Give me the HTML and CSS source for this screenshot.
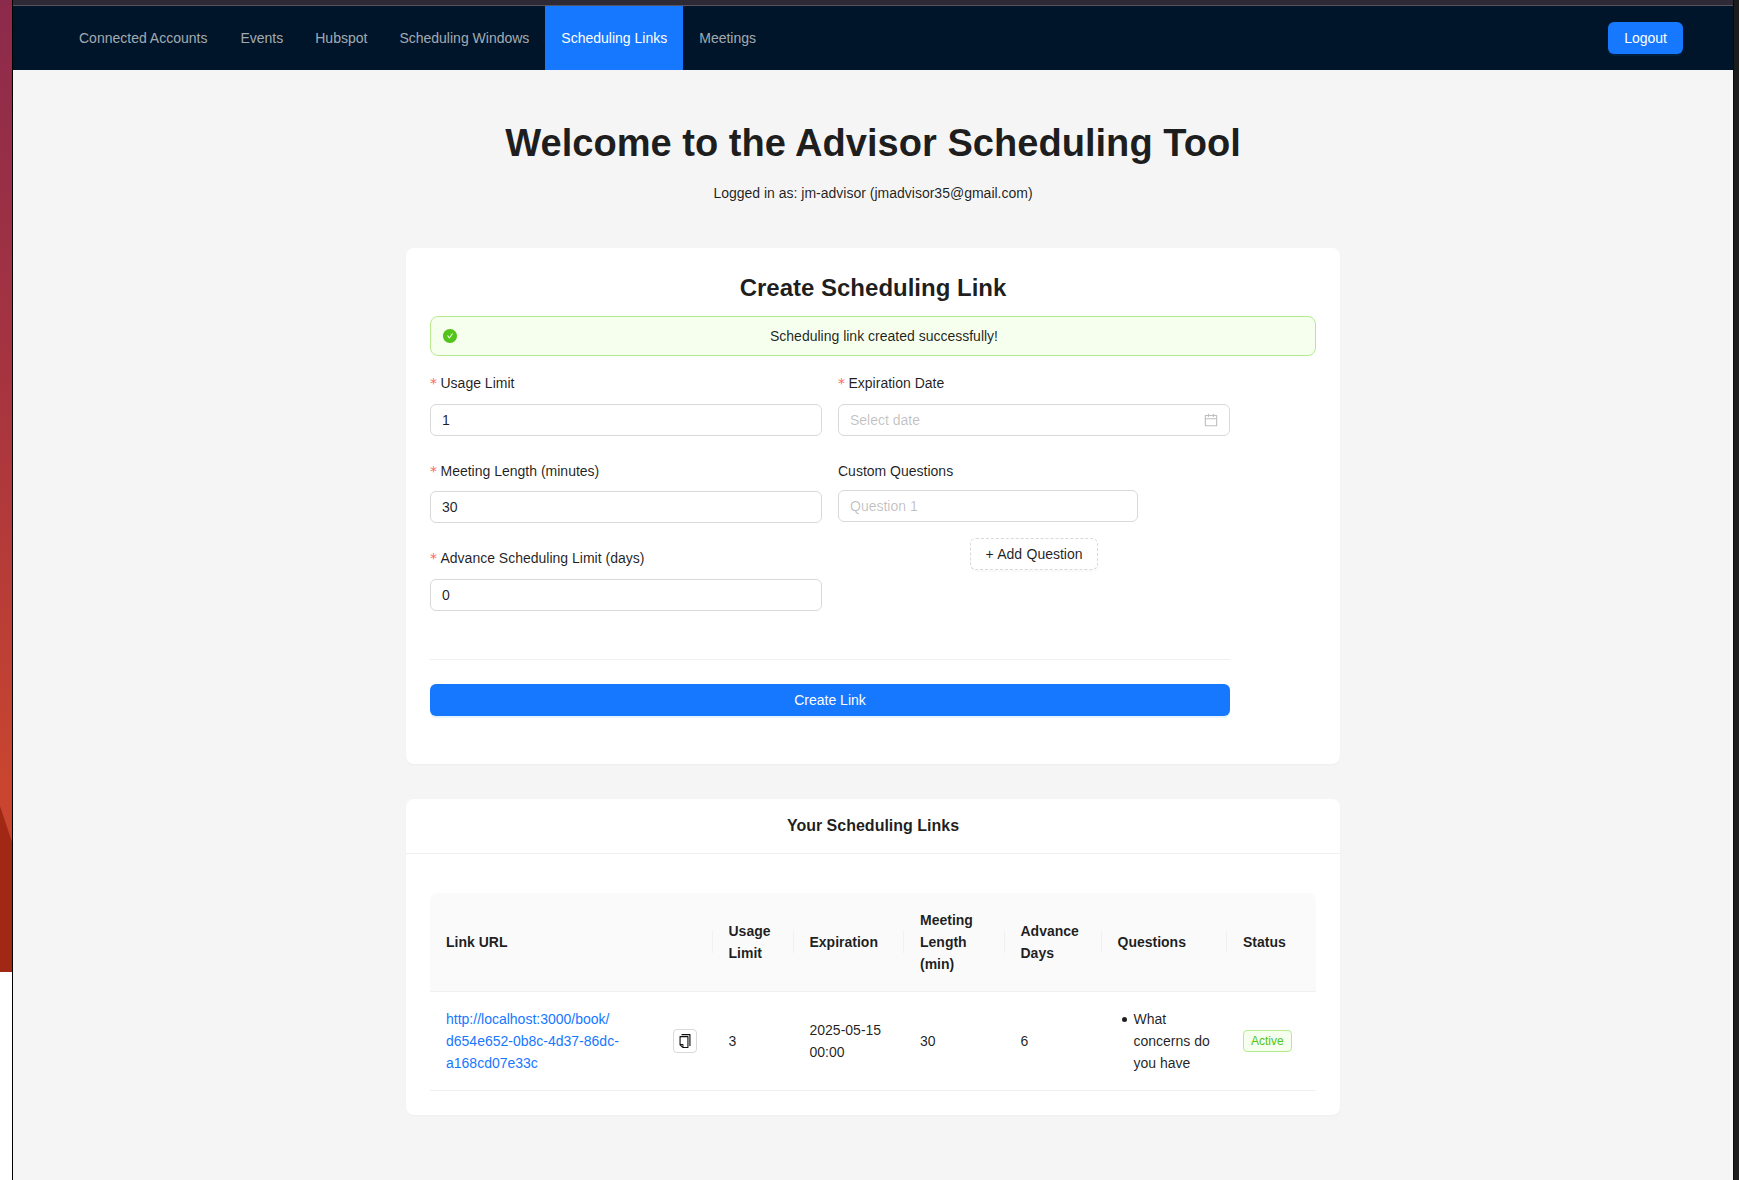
FILE: index.html
```html
<!DOCTYPE html>
<html lang="en">
<head>
  <meta charset="UTF-8" />
  <meta name="viewport" content="width=device-width, initial-scale=1.0" />
  <title>Advisor Scheduling Tool</title>
  <link rel="stylesheet" href="styles.css">
</head>
<body>
  <div class="desk-strip">
    <div class="wallpaper"></div>
  </div>

  <div class="app-window">
    <div class="title-bar"></div>

    <nav class="top-nav">
      <ul class="nav-menu">
        <li class="nav-item">Connected Accounts</li>
        <li class="nav-item">Events</li>
        <li class="nav-item">Hubspot</li>
        <li class="nav-item">Scheduling Windows</li>
        <li class="nav-item nav-item-active">Scheduling Links</li>
        <li class="nav-item">Meetings</li>
      </ul>
      <button class="btn btn-primary" type="button">Logout</button>
    </nav>

    <main class="page">
      <h1 class="page-title">Welcome to the Advisor Scheduling Tool</h1>
      <p class="page-subtitle">Logged in as: jm-advisor (jmadvisor35@gmail.com)</p>

      <section class="card create-card">
        <h2 class="card-title">Create Scheduling Link</h2>

        <div class="alert">
          <svg class="alert-icon" viewBox="64 64 896 896" aria-hidden="true">
            <path d="M512 64C264.6 64 64 264.6 64 512s200.6 448 448 448 448-200.6 448-448S759.4 64 512 64zm193.5 301.7l-210.6 292a31.8 31.8 0 0 1-51.7 0L318.5 484.9c-3.8-5.3 0-12.7 6.5-12.7h46.9c10.2 0 19.9 4.9 25.9 13.3l71.2 98.8 157.2-218c6-8.3 15.6-13.3 25.9-13.3H699c6.5 0 10.3 7.4 6.5 12.7z"/>
          </svg>
          <span class="alert-text">Scheduling link created successfully!</span>
        </div>

        <form class="link-form">
          <div class="form-grid">
            <div class="form-col">
              <div class="field">
                <label class="field-label"><span class="required">*</span>Usage Limit</label>
                <input class="text-input" type="text" value="1">
              </div>
              <div class="field">
                <label class="field-label"><span class="required">*</span>Meeting Length (minutes)</label>
                <input class="text-input" type="text" value="30">
              </div>
              <div class="field">
                <label class="field-label"><span class="required">*</span>Advance Scheduling Limit (days)</label>
                <input class="text-input" type="text" value="0">
              </div>
            </div>

            <div class="form-col">
              <div class="field">
                <label class="field-label"><span class="required">*</span>Expiration Date</label>
                <div class="date-input">
                  <input class="date-input-inner" type="text" placeholder="Select date">
                  <svg class="date-icon" viewBox="64 64 896 896" aria-hidden="true">
                    <path d="M880 184H712v-64c0-4.4-3.6-8-8-8h-56c-4.4 0-8 3.6-8 8v64H384v-64c0-4.4-3.6-8-8-8h-56c-4.4 0-8 3.6-8 8v64H144c-17.7 0-32 14.3-32 32v664c0 17.7 14.3 32 32 32h736c17.7 0 32-14.3 32-32V216c0-17.7-14.3-32-32-32zm-40 656H184V460h656v380zM184 392V256h128v48c0 4.4 3.6 8 8 8h56c4.4 0 8-3.6 8-8v-48h256v48c0 4.4 3.6 8 8 8h56c4.4 0 8-3.6 8-8v-48h128v136H184z"/>
                  </svg>
                </div>
              </div>
              <div class="field questions-field">
                <label class="field-label">Custom Questions</label>
                <input class="text-input question-input" type="text" placeholder="Question 1">
                <button class="btn btn-dashed" type="button">+ Add Question</button>
              </div>
            </div>
          </div>

          <div class="divider"></div>
          <button class="btn btn-primary btn-block" type="button">Create Link</button>
        </form>
      </section>

      <section class="card links-card">
        <div class="links-head">Your Scheduling Links</div>
        <div class="links-body">
          <table class="links-table">
            <colgroup>
              <col class="col-url">
              <col class="col-usage">
              <col class="col-expiration">
              <col class="col-length">
              <col class="col-advance">
              <col class="col-questions">
              <col class="col-status">
            </colgroup>
            <thead>
              <tr>
                <th>Link URL</th>
                <th>Usage Limit</th>
                <th>Expiration</th>
                <th>Meeting Length (min)</th>
                <th>Advance Days</th>
                <th>Questions</th>
                <th>Status</th>
              </tr>
            </thead>
            <tbody>
              <tr>
                <td>
                  <div class="url-cell">
                    <a class="url-link" href="#">http://localhost:3000/book/<wbr>d654e652-0b8c-4d37-86dc-a168cd07e33c</a>
                    <button class="copy-btn" type="button" aria-label="Copy link">
                      <svg class="copy-icon" viewBox="64 64 896 896" aria-hidden="true">
                        <path d="M832 64H296c-4.4 0-8 3.6-8 8v56c0 4.4 3.6 8 8 8h496v688c0 4.4 3.6 8 8 8h56c4.4 0 8-3.6 8-8V96c0-17.7-14.3-32-32-32zM704 192H192c-17.7 0-32 14.3-32 32v530.7c0 8.5 3.4 16.6 9.4 22.6l173.3 173.3c2.2 2.2 4.7 4 7.4 5.5v1.9h4.2c3.5 1.3 7.2 2 11 2H704c17.7 0 32-14.3 32-32V224c0-17.7-14.3-32-32-32zM350 856.2L263.9 770H350v86.2zM664 888H414V746c0-22.1-17.9-40-40-40H232V264h432v624z"/>
                      </svg>
                    </button>
                  </div>
                </td>
                <td>3</td>
                <td>2025-05-15 00:00</td>
                <td>30</td>
                <td>6</td>
                <td>
                  <ul class="question-list">
                    <li>What concerns do you have</li>
                  </ul>
                </td>
                <td><span class="tag-active">Active</span></td>
              </tr>
            </tbody>
          </table>
        </div>
      </section>
    </main>
  </div>

  <div class="side-strip"></div>
</body>
</html>
```

FILE: styles.css
```css
* {
  box-sizing: border-box;
}
html, body {
  height: 100%;
}
body {
  margin: 0;
  display: flex;
  overflow: hidden;
  font-family: "Liberation Sans", Arial, sans-serif;
  font-size: 14px;
  line-height: 22px;
  color: rgba(0, 0, 0, 0.88);
  background: #fff;
}

/* bits of the desktop around the browser window */
.desk-strip {
  width: 13px;
  flex: none;
  background: #fff;
  border-right: 1px solid #000;
}
.wallpaper {
  position: relative;
  height: 972px;
  background: linear-gradient(180deg, #8c2a4c 0, #a8353f 400px, #c9452f 790px);
}
.wallpaper::after {
  content: "";
  position: absolute;
  left: 0;
  right: 0;
  top: 806px;
  bottom: 0;
  background: #a02815;
  clip-path: polygon(0 0, 100% 36px, 100% 100%, 0 100%);
}
.side-strip {
  width: 6px;
  flex: none;
  background: #1c1c1c;
  border-left: 1px solid #0a0a0a;
}

.app-window {
  flex: 1;
  min-width: 0;
  display: flex;
  flex-direction: column;
  background: #f5f5f5;
}
.title-bar {
  height: 6px;
  flex: none;
  background: #2e2a35;
  border-bottom: 1px solid #56535e;
}

.top-nav {
  height: 64px;
  flex: none;
  display: flex;
  align-items: center;
  justify-content: space-between;
  padding: 0 50px;
  background: #001529;
}
.nav-menu {
  display: flex;
  height: 100%;
  margin: 0;
  padding: 0;
  list-style: none;
}
.nav-item {
  padding: 0 16px;
  line-height: 64px;
  color: rgba(255, 255, 255, 0.65);
}
.nav-item:first-child {
  padding-right: 17px;
}
.nav-item-active {
  color: #fff;
  background: #1677ff;
}

.btn {
  height: 32px;
  padding: 0 15px;
  border: 1px solid transparent;
  border-radius: 6px;
  font: inherit;
}
.btn-primary {
  color: #fff;
  background: #1677ff;
  box-shadow: 0 2px 0 rgba(5, 145, 255, 0.1);
}
.btn-block {
  display: block;
  width: 100%;
}
.btn-dashed {
  display: block;
  margin: 16px auto 0;
  padding: 0 14.5px;
  word-spacing: 0.5px;
  color: rgba(0, 0, 0, 0.88);
  background: #fff;
  border: 1px dashed #d9d9d9;
  box-shadow: 0 2px 0 rgba(0, 0, 0, 0.02);
}

.page {
  flex: 1;
  display: flex;
  flex-direction: column;
  align-items: center;
  padding-top: 50px;
}
.page-title {
  margin: 0;
  font-size: 38.08px;
  line-height: 46px;
  font-weight: 700;
}
.page-subtitle {
  margin: 16px 0 0;
}

.card {
  width: 934px;
  background: #fff;
  border-radius: 8px;
  box-shadow: 0 1px 2px rgba(0, 0, 0, 0.03);
}
.create-card {
  margin-top: 44px;
  padding: 24px;
}
.card-title {
  margin: 0 0 12px;
  font-size: 24px;
  line-height: 32px;
  font-weight: 700;
  text-align: center;
}

.alert {
  display: flex;
  align-items: center;
  height: 40px;
  padding: 0 12px;
  margin-bottom: 16px;
  background: #f6ffed;
  border: 1px solid #b7eb8f;
  border-radius: 8px;
}
.alert-icon {
  width: 14px;
  height: 14px;
  margin-right: 8px;
  fill: #52c41a;
}
.alert-text {
  flex: 1;
  text-align: center;
}

.link-form {
  width: 800px;
}
.form-grid {
  display: grid;
  grid-template-columns: 1fr 1fr;
  column-gap: 16px;
}
.field {
  margin-bottom: 24px;
}
.field-label {
  display: block;
  height: 31.5px;
}
.required {
  margin-right: 3.5px;
  font-family: "DejaVu Sans", sans-serif;
  line-height: 1;
  color: #ff6466;
}
.questions-field .field-label {
  height: 30.5px;
}
.text-input,
.date-input {
  display: block;
  width: 100%;
  height: 32px;
  background: #fff;
  border: 1px solid #d9d9d9;
  border-radius: 6px;
}
.text-input {
  padding: 0 11px;
  font: inherit;
  color: rgba(0, 0, 0, 0.88);
  outline: none;
}
.question-input {
  width: 300px;
}
.date-input {
  display: flex;
  align-items: center;
  padding: 0 11px;
}
.date-input-inner {
  flex: 1;
  min-width: 0;
  padding: 0;
  border: 0;
  outline: none;
  font: inherit;
  background: transparent;
}
input::placeholder {
  color: rgba(0, 0, 0, 0.25);
}
.date-icon {
  width: 14px;
  height: 14px;
  fill: rgba(0, 0, 0, 0.25);
}
.divider {
  height: 1px;
  margin: 24px 0;
  background: rgba(5, 5, 5, 0.06);
}
.link-form .btn-block {
  margin-bottom: 24px;
}

.links-card {
  margin-top: 35px;
}
.links-head {
  height: 55px;
  line-height: 54px;
  font-size: 16px;
  font-weight: 700;
  text-align: center;
  border-bottom: 1px solid #f0f0f0;
}
.links-body {
  padding: 39px 24px 24px;
}
.links-table {
  width: 886px;
  table-layout: fixed;
  border-collapse: separate;
  border-spacing: 0;
}
.col-url { width: 282.5px; }
.col-usage { width: 81px; }
.col-expiration { width: 110.5px; }
.col-length { width: 100.5px; }
.col-advance { width: 97px; }
.col-questions { width: 125.5px; }
.col-status { width: 89px; }

.links-table th,
.links-table td {
  padding: 16px;
  text-align: left;
  border-bottom: 1px solid #f0f0f0;
}
.links-table th {
  position: relative;
  font-weight: 700;
  background: #fafafa;
}
.links-table th:first-child {
  border-top-left-radius: 8px;
}
.links-table th:last-child {
  border-top-right-radius: 8px;
}
.links-table th:not(:last-child)::before {
  content: "";
  position: absolute;
  top: 50%;
  right: 0;
  width: 1px;
  height: 22px;
  transform: translateY(-50%);
  background: #f0f0f0;
}
.url-cell {
  display: flex;
  align-items: center;
  justify-content: space-between;
  gap: 8px;
}
.url-link {
  max-width: 180px;
  color: #1677ff;
  text-decoration: none;
}
.copy-btn {
  display: flex;
  align-items: center;
  justify-content: center;
  flex: none;
  width: 24px;
  height: 24px;
  padding: 0;
  background: #fff;
  border: 1px solid #d9d9d9;
  border-radius: 4px;
}
.copy-icon {
  width: 14px;
  height: 14px;
  fill: #111;
}
.question-list {
  margin: 0;
  padding-left: 16px;
  list-style: none;
}
.question-list li {
  position: relative;
}
.question-list li::before {
  content: "";
  position: absolute;
  top: 9px;
  left: -12px;
  width: 5px;
  height: 5px;
  border-radius: 50%;
  background: rgba(0, 0, 0, 0.88);
}
.tag-active {
  display: inline-block;
  padding: 0 7px;
  font-size: 12px;
  line-height: 20px;
  color: #52c41a;
  background: #f6ffed;
  border: 1px solid #b7eb8f;
  border-radius: 4px;
}
```
